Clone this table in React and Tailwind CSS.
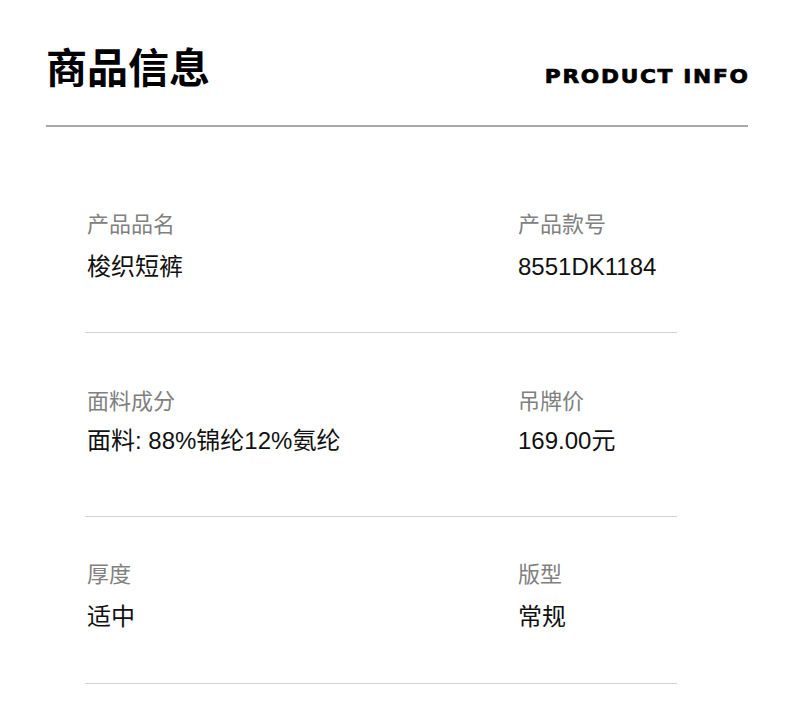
import React from "react";

const rows = [
  { pt: "pt-[84px]", gap: "mt-[22px]", pb: "pb-[53px]", a: ["产品品名", "梭织短裤"], b: ["产品款号", "8551DK1184"] },
  { pt: "pt-[55px]", gap: "mt-[19px]", pb: "pb-[63px]", a: ["面料成分", "面料: 88%锦纶12%氨纶"], b: ["吊牌价", "169.00元"] },
  { pt: "pt-[44px]", gap: "mt-[22px]", pb: "pb-[54px]", a: ["厚度", "适中"], b: ["版型", "常规"] },
];

function Cell({ label, value, gap }) {
  return (
    <div className="pl-[2px]">
      <div className="text-[22px] leading-none text-[#808080] font-['Noto_Sans_CJK_SC',sans-serif]">{label}</div>
      <div className={`${gap} text-[24px] leading-none text-[#111111] font-['Liberation_Sans','Noto_Sans_CJK_SC',sans-serif]`}>
        {value}
      </div>
    </div>
  );
}

export default function App() {
  return (
    <div className="w-[790px] h-[712px] bg-white overflow-hidden">
      <div className="px-[46px] pt-[45px]">
        <div className="flex items-baseline justify-between">
          <h1 className="text-[41px] leading-none font-bold text-black font-['Noto_Sans_CJK_SC',sans-serif]">商品信息</h1>
          <div className="origin-right scale-x-[1.14] mr-[-6px] text-[19px] leading-none font-bold tracking-[1.5px] text-black font-['DejaVu_Sans',sans-serif] [-webkit-text-stroke:0.7px_black]">
            PRODUCT INFO
          </div>
        </div>
        <div className="mt-[39px] h-[2px] w-[702px] bg-[#a9a9a9]" />
      </div>
      <div className="ml-[85px] w-[592px]">
        {rows.map((r, i) => (
          <div key={i} className={`${r.pt} ${r.pb} border-b border-[#d2d2d2] grid grid-cols-[431px_1fr]`}>
            <Cell label={r.a[0]} value={r.a[1]} gap={r.gap} />
            <Cell label={r.b[0]} value={r.b[1]} gap={r.gap} />
          </div>
        ))}
      </div>
    </div>
  );
}
